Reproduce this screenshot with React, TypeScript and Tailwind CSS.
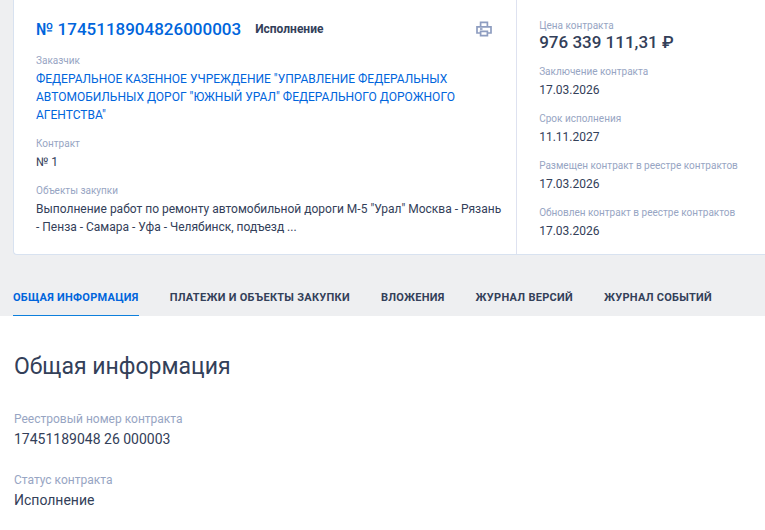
import React from 'react';

interface FieldProps {
  label: string;
  children: React.ReactNode;
}

const tabs = ['Общая информация', 'Платежи и объекты закупки', 'Вложения', 'Журнал версий', 'Журнал событий'];

const dates = [
  { label: 'Заключение контракта', value: '17.03.2026' },
  { label: 'Срок исполнения', value: '11.11.2027' },
  { label: 'Размещен контракт в реестре контрактов', value: '17.03.2026' },
  { label: 'Обновлен контракт в реестре контрактов', value: '17.03.2026' },
];

const details = [
  { label: 'Реестровый номер контракта', value: '17451189048 26 000003' },
  { label: 'Статус контракта', value: 'Исполнение' },
];

const PrintIcon: React.FC = () => (
  <svg width="16" height="16" viewBox="0 0 16 16" fill="none" stroke="currentColor" strokeWidth="1.7" aria-hidden="true">
    <path d="M4.6 5.5V1.3h6.8v4.2" />
    <path d="M4.6 12H1V5.8h14V12h-3.6" />
    <path d="M4.6 10.3h6.8v4.4H4.6z" />
    <path d="M4 8h2.5" />
  </svg>
);

const Field: React.FC<FieldProps> = ({ label, children }) => (
  <div>
    <dt className="text-[10px] leading-3 text-[#97a5c3]">{label}</dt>
    <dd className="mt-[3px] text-xs leading-[18px]">{children}</dd>
  </div>
);

const ContractCard: React.FC = () => (
  <section className="ml-[13px] flex rounded-bl-sm border-b border-l border-[#d8e2f0] bg-white">
    <div className="flex-1 border-r border-[#dee2f0] pb-[18px] pl-[22px] pr-3 pt-[19px]">
      <div className="flex items-center pr-3">
        <h1 className="text-[17px] font-medium leading-5">
          <a href="#contract" className="text-[#0065dc]">№ 1745118904826000003</a>
        </h1>
        <span className="ml-[14px] text-xs font-bold leading-4">Исполнение</span>
        <button type="button" aria-label="Печать" className="ml-auto text-[#8e9dc0]">
          <PrintIcon />
        </button>
      </div>
      <dl className="mt-4 flex flex-col gap-[14px]">
        <Field label="Заказчик">
          <a href="#customer" className="text-[#0065dc]">
            ФЕДЕРАЛЬНОЕ КАЗЕННОЕ УЧРЕЖДЕНИЕ "УПРАВЛЕНИЕ ФЕДЕРАЛЬНЫХ АВТОМОБИЛЬНЫХ ДОРОГ "ЮЖНЫЙ УРАЛ" ФЕДЕРАЛЬНОГО ДОРОЖНОГО АГЕНТСТВА"
          </a>
        </Field>
        <Field label="Контракт">№ 1</Field>
        <Field label="Объекты закупки">
          Выполнение работ по ремонту автомобильной дороги М-5 "Урал" Москва - Рязань - Пенза - Самара - Уфа - Челябинск, подъезд ...
        </Field>
      </dl>
    </div>
    <dl className="flex w-[33%] flex-col gap-[14px] pl-[22px] pt-5">
      <div>
        <dt className="text-[10px] leading-3 text-[#97a5c3]">Цена контракта</dt>
        <dd className="text-[17px] font-medium leading-5">976 339 111,31 ₽</dd>
      </div>
      {dates.map(({ label, value }) => (
        <Field key={label} label={label}>{value}</Field>
      ))}
    </dl>
  </section>
);

const App: React.FC = () => {
  return (
    <div className="min-h-screen bg-white font-['Roboto',sans-serif] text-[#334059]">
      <header className="bg-[#eeeff1]">
        <ContractCard />
        <nav className="flex gap-[31px] pl-[13px] pt-[34px]" aria-label="Разделы контракта">
          {tabs.map((tab, index) => (
            <a
              key={tab}
              href={`#tab-${index}`}
              className={`whitespace-nowrap border-b pb-2 text-[11px] font-bold uppercase leading-[18px] tracking-wide ${
                index === 0 ? 'border-[#0d7fdc] text-[#0065dc]' : 'border-transparent'
              }`}
            >
              {tab}
            </a>
          ))}
        </nav>
      </header>
      <main className="px-[14px] pt-[37px]">
        <h2 className="text-[23px] leading-7">Общая информация</h2>
        <dl className="mt-[30px] flex flex-col gap-[23px]">
          {details.map(({ label, value }) => (
            <div key={label}>
              <dt className="text-xs leading-4 text-[#97a5c3]">{label}</dt>
              <dd className="mt-[2px] text-sm leading-5">{value}</dd>
            </div>
          ))}
        </dl>
      </main>
    </div>
  );
};

export default App;
